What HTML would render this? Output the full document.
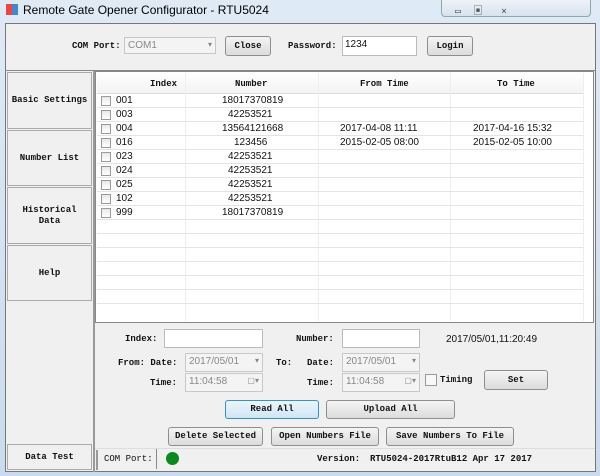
<!DOCTYPE html><html><head><style>
*{box-sizing:border-box;margin:0;padding:0}
body{width:600px;height:476px;background:linear-gradient(#dfeaf5,#c9dbee);font-family:"Liberation Mono","Noto Sans CJK SC",monospace;font-size:9px;color:#111;position:relative;overflow:hidden}
.a{position:absolute}
.btn{position:absolute;background:linear-gradient(#f4f4f4,#dcdcdc);border:1px solid #8e8e8e;border-radius:3px;text-align:center;font-size:9px;font-weight:bold;white-space:nowrap}
.inp{position:absolute;background:#fff;border:1px solid #bbb}
.dis{position:absolute;background:#f4f4f4;border:1px solid #c8c8c8;color:#888;font-family:"Liberation Sans",sans-serif;font-size:10px;padding:2px 3px}
.nav{position:absolute;left:7px;width:85px;background:#f0f0f0;border:1px solid #aaa;text-align:center;font-weight:bold;font-size:9px;white-space:nowrap}
.row{position:absolute;left:97px;width:486px;height:14px;border-bottom:1px solid #e4e4e4;font-family:"Liberation Sans",sans-serif;font-size:10px}
.cb{position:absolute;left:4px;top:2px;width:10px;height:10px;border:1px solid #999;background:linear-gradient(#e8e8e8,#fff)}
.lb{position:absolute;font-weight:bold;white-space:nowrap}
</style></head><body>
<div class="a" style="left:6px;top:4px;width:12px;height:11px;background:linear-gradient(90deg,#e44 50%,#48c 50%)"></div>
<div class="a" style="left:23px;top:3px;font-family:'Liberation Sans',sans-serif;font-size:12px;color:#000">Remote Gate Opener Configurator - RTU5024</div>
<div class="a" style="left:441px;top:0;width:150px;height:17px;border:1px solid #8aa;border-top:none;border-radius:0 0 4px 4px;background:linear-gradient(#eef3f8,#d7e2ee)"></div>
<div class="a" style="left:455px;top:2px;font-size:10px;color:#555">▭ &nbsp;▣ &nbsp;&nbsp;⨯</div>
<div class="a" style="left:5px;top:23px;width:591px;height:449px;background:#f0f0f0;border:1px solid #777"></div>
<div class="lb" style="left:72px;top:41px">COM Port:</div>
<div class="dis" style="left:124px;top:37px;width:92px;height:17px">COM1<span style="float:right;font-size:8px">▾</span></div>
<div class="btn" style="left:225px;top:36px;width:46px;height:20px;line-height:18px">Close</div>
<div class="lb" style="left:288px;top:41px">Password:</div>
<div class="inp" style="left:342px;top:36px;width:75px;height:20px;font-family:'Liberation Sans';font-size:10px;padding:2px">1234</div>
<div class="btn" style="left:427px;top:36px;width:46px;height:20px;line-height:18px">Login</div>
<div class="a" style="left:5px;top:70px;width:591px;height:1px;background:#888"></div>
<div class="nav" style="top:72px;height:57px;line-height:55px">Basic Settings</div>
<div class="nav" style="top:130px;height:56px;line-height:54px">Number List</div>
<div class="nav" style="top:187px;height:57px;padding-top:17px;line-height:11px">Historical<br>Data</div>
<div class="nav" style="top:245px;height:56px;line-height:54px">Help</div>
<div class="nav" style="top:444px;height:26px;line-height:24px">Data Test</div>
<div class="a" style="left:93px;top:71px;width:2px;height:401px;background:#999"></div>
<div class="a" style="left:95px;top:71px;width:499px;height:252px;background:#fff;border:1px solid #888"></div>
<div class="a" style="left:97px;top:73px;width:486px;height:21px;background:linear-gradient(#fff,#f3f3f3);border-bottom:1px solid #ddd"></div>
<div class="lb" style="left:150px;top:79px">Index</div>
<div class="lb" style="left:235px;top:79px">Number</div>
<div class="lb" style="left:360px;top:79px">From Time</div>
<div class="lb" style="left:497px;top:79px">To Time</div>
<div class="a" style="left:185px;top:73px;width:1px;height:248px;background:#eee"></div>
<div class="a" style="left:318px;top:73px;width:1px;height:248px;background:#eee"></div>
<div class="a" style="left:450px;top:73px;width:1px;height:248px;background:#eee"></div>
<div class="a" style="left:583px;top:73px;width:1px;height:248px;background:#eee"></div>
<div class="row" style="top:94px"><div class="cb"></div><span class="a" style="left:19px;top:1px">001</span><span class="a" style="left:125px;top:1px">18017370819</span></div>
<div class="row" style="top:108px"><div class="cb"></div><span class="a" style="left:19px;top:1px">003</span><span class="a" style="left:131px;top:1px">42253521</span></div>
<div class="row" style="top:122px"><div class="cb"></div><span class="a" style="left:19px;top:1px">004</span><span class="a" style="left:125px;top:1px">13564121668</span><span class="a" style="left:243px;top:1px">2017-04-08 11:11</span><span class="a" style="left:376px;top:1px">2017-04-16 15:32</span></div>
<div class="row" style="top:136px"><div class="cb"></div><span class="a" style="left:19px;top:1px">016</span><span class="a" style="left:137px;top:1px">123456</span><span class="a" style="left:243px;top:1px">2015-02-05 08:00</span><span class="a" style="left:376px;top:1px">2015-02-05 10:00</span></div>
<div class="row" style="top:150px"><div class="cb"></div><span class="a" style="left:19px;top:1px">023</span><span class="a" style="left:131px;top:1px">42253521</span></div>
<div class="row" style="top:164px"><div class="cb"></div><span class="a" style="left:19px;top:1px">024</span><span class="a" style="left:131px;top:1px">42253521</span></div>
<div class="row" style="top:178px"><div class="cb"></div><span class="a" style="left:19px;top:1px">025</span><span class="a" style="left:131px;top:1px">42253521</span></div>
<div class="row" style="top:192px"><div class="cb"></div><span class="a" style="left:19px;top:1px">102</span><span class="a" style="left:131px;top:1px">42253521</span></div>
<div class="row" style="top:206px"><div class="cb"></div><span class="a" style="left:19px;top:1px">999</span><span class="a" style="left:125px;top:1px">18017370819</span></div>
<div class="row" style="top:220px"></div><div class="row" style="top:234px"></div><div class="row" style="top:248px"></div><div class="row" style="top:262px"></div><div class="row" style="top:276px"></div><div class="row" style="top:290px"></div>
<div class="lb" style="left:125px;top:334px">Index:</div>
<div class="inp" style="left:164px;top:329px;width:99px;height:19px"></div>
<div class="lb" style="left:296px;top:334px">Number:</div>
<div class="inp" style="left:342px;top:329px;width:78px;height:19px"></div>
<div class="a" style="left:446px;top:334px;font-family:'Liberation Sans';font-size:10px">2017/05/01,11:20:49</div>
<div class="lb" style="left:118px;top:358px">From: Date:</div>
<div class="dis" style="left:185px;top:353px;width:78px;height:19px">2017/05/01<span style="float:right;font-size:8px">▾</span></div>
<div class="lb" style="left:276px;top:358px">To:</div>
<div class="lb" style="left:307px;top:358px">Date:</div>
<div class="dis" style="left:342px;top:353px;width:78px;height:19px">2017/05/01<span style="float:right;font-size:8px">▾</span></div>
<div class="lb" style="left:150px;top:378px">Time:</div>
<div class="dis" style="left:185px;top:373px;width:78px;height:19px">11:04:58<span style="float:right;font-size:8px">▢▾</span></div>
<div class="lb" style="left:307px;top:378px">Time:</div>
<div class="dis" style="left:342px;top:373px;width:78px;height:19px">11:04:58<span style="float:right;font-size:8px">▢▾</span></div>
<div class="a" style="left:425px;top:374px;width:12px;height:12px;border:1px solid #999;background:#f8f8f8"></div>
<div class="lb" style="left:440px;top:375px">Timing</div>
<div class="btn" style="left:484px;top:370px;width:64px;height:20px;line-height:18px">Set</div>
<div class="btn" style="left:225px;top:400px;width:94px;height:19px;line-height:17px;border-color:#3c8fc0;background:linear-gradient(#eaf5fc,#cfe6f5)">Read All</div>
<div class="btn" style="left:326px;top:400px;width:129px;height:19px;line-height:17px">Upload All</div>
<div class="btn" style="left:168px;top:427px;width:95px;height:19px;line-height:17px">Delete Selected</div>
<div class="btn" style="left:271px;top:427px;width:108px;height:19px;line-height:17px">Open Numbers File</div>
<div class="btn" style="left:386px;top:427px;width:128px;height:19px;line-height:17px">Save Numbers To File</div>
<div class="a" style="left:95px;top:448px;width:500px;height:1px;background:#ddd"></div>
<div class="a" style="left:96px;top:450px;width:2px;height:20px;background:#999"></div>
<div class="lb" style="left:104px;top:454px;font-weight:normal">COM Port:</div>
<div class="a" style="left:156px;top:449px;width:1px;height:20px;background:#888"></div>
<div class="a" style="left:166px;top:452px;width:13px;height:13px;border-radius:50%;background:#0a8a1c"></div>
<div class="lb" style="left:317px;top:454px">Version:</div>
<div class="a" style="left:370px;top:454px;font-weight:bold">RTU5024-2017RtuB12 Apr 17 2017</div>
</body></html>
